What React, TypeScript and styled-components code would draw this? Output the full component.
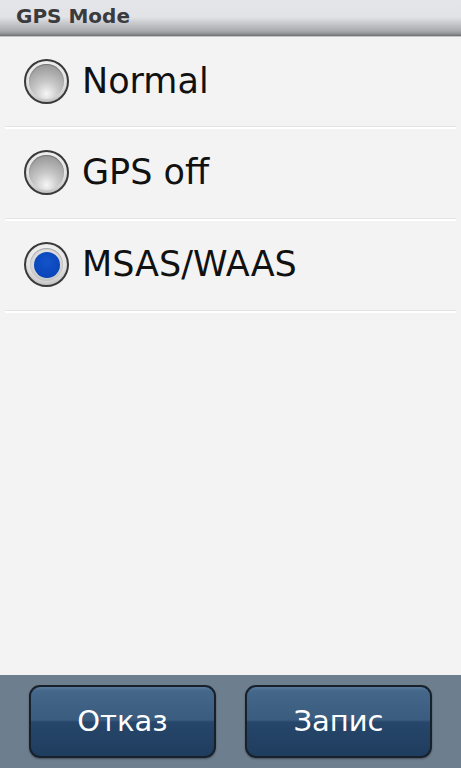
import React, { useState } from 'react';
import styled, { createGlobalStyle } from 'styled-components';

const GlobalStyle = createGlobalStyle`
  html, body {
    margin: 0;
    padding: 0;
    height: 100%;
  }
  body {
    font-family: "DejaVu Sans", "Noto Sans", sans-serif;
    background: #f4f3f3;
  }
  #root {
    height: 100%;
  }
`;

const Screen = styled.div`
  width: 461px;
  height: 768px;
  display: flex;
  flex-direction: column;
  background: #f4f3f3;
  overflow: hidden;
`;

const TitleBar = styled.div`
  height: 37px;
  flex: none;
  display: flex;
  align-items: flex-start;
  padding: 5px 0 0 16px;
  box-sizing: border-box;
  background: linear-gradient(
    to bottom,
    #e4e5e9 0px,
    #e2e3e7 17px,
    #c9cace 23px,
    #a9aaae 31px,
    #8e8f93 34px,
    #6a6b6f 36px
  );
  border-bottom: 1px solid #c4c4c6;
`;

const Title = styled.span`
  font-size: 20px;
  font-weight: bold;
  color: #3b3b3d;
  line-height: 1.1;
`;

const List = styled.div`
  flex: 1;
  display: flex;
  flex-direction: column;
  padding: 0 5px;
`;

const Row = styled.label`
  height: 92px;
  display: flex;
  align-items: center;
  gap: 13px;
  padding-left: 19px;
  box-sizing: border-box;
  border-bottom: 1px solid #e4e4e4;
  box-shadow: 0 2px 0 #ffffff;
  cursor: pointer;
  &:first-child {
    height: 90px;
  }
`;

const RadioOuter = styled.div`
  width: 45px;
  height: 45px;
  flex: none;
  border-radius: 50%;
  box-sizing: border-box;
  border: 2px solid #3a3a3c;
  background: radial-gradient(circle at 50% 35%, #ffffff 0%, #e2e2e2 60%, #9a9a9a 100%);
  display: flex;
  align-items: center;
  justify-content: center;
`;

const RadioInner = styled.div<{ $checked: boolean }>`
  width: ${p => (p.$checked ? 33 : 35)}px;
  height: ${p => (p.$checked ? 33 : 35)}px;
  border-radius: 50%;
  box-sizing: border-box;
  display: flex;
  align-items: center;
  justify-content: center;
  background: ${p =>
    p.$checked
      ? 'radial-gradient(circle at 50% 40%, #f4f4f4 0%, #d4d4d4 60%, #a8a8a8 100%)'
      : 'radial-gradient(circle at 50% 85%, #f6f6f6 0%, #c8c8c8 35%, #a5a5a5 70%, #8d8d8d 100%)'};
  box-shadow: inset 0 1px 1px rgba(0, 0, 0, 0.25);
`;

const Dot = styled.div`
  width: 26px;
  height: 26px;
  border-radius: 50%;
  background: radial-gradient(circle at 50% 40%, #1353c8 0%, #0a45bb 70%, #083a9e 100%);
`;

const Label = styled.span`
  font-size: 35px;
  color: #111111;
  line-height: 1;
`;

const Footer = styled.div`
  height: 93px;
  flex: none;
  background: #6d7e8e;
  display: flex;
  justify-content: space-between;
  padding: 10px 29px 0 29px;
  box-sizing: border-box;
`;

const Button = styled.button`
  width: 187px;
  height: 73px;
  border-radius: 11px;
  border: 2px solid #18212b;
  box-shadow: 0 1px 2px rgba(0, 0, 0, 0.35);
  background: linear-gradient(
    to bottom,
    #58799a 0px,
    #44678a 4px,
    #3a5c7e 33px,
    #26466a 35px,
    #1f3d5e 100%
  );
  color: #ffffff;
  font-family: "DejaVu Sans", "Noto Sans", sans-serif;
  font-size: 29px;
  padding: 0 0 2px 0;
  display: flex;
  align-items: center;
  justify-content: center;
  cursor: pointer;
`;

const options = ['Normal', 'GPS off', 'MSAS/WAAS'];

export default function App() {
  const [selected, setSelected] = useState(2);

  return (
    <Screen>
      <GlobalStyle />
      <TitleBar>
        <Title>GPS Mode</Title>
      </TitleBar>
      <List>
        {options.map((opt, i) => (
          <Row key={opt} onClick={() => setSelected(i)}>
            <RadioOuter>
              <RadioInner $checked={selected === i}>
                {selected === i && <Dot />}
              </RadioInner>
            </RadioOuter>
            <Label>{opt}</Label>
          </Row>
        ))}
      </List>
      <Footer>
        <Button>Отказ</Button>
        <Button>Запис</Button>
      </Footer>
    </Screen>
  );
}
